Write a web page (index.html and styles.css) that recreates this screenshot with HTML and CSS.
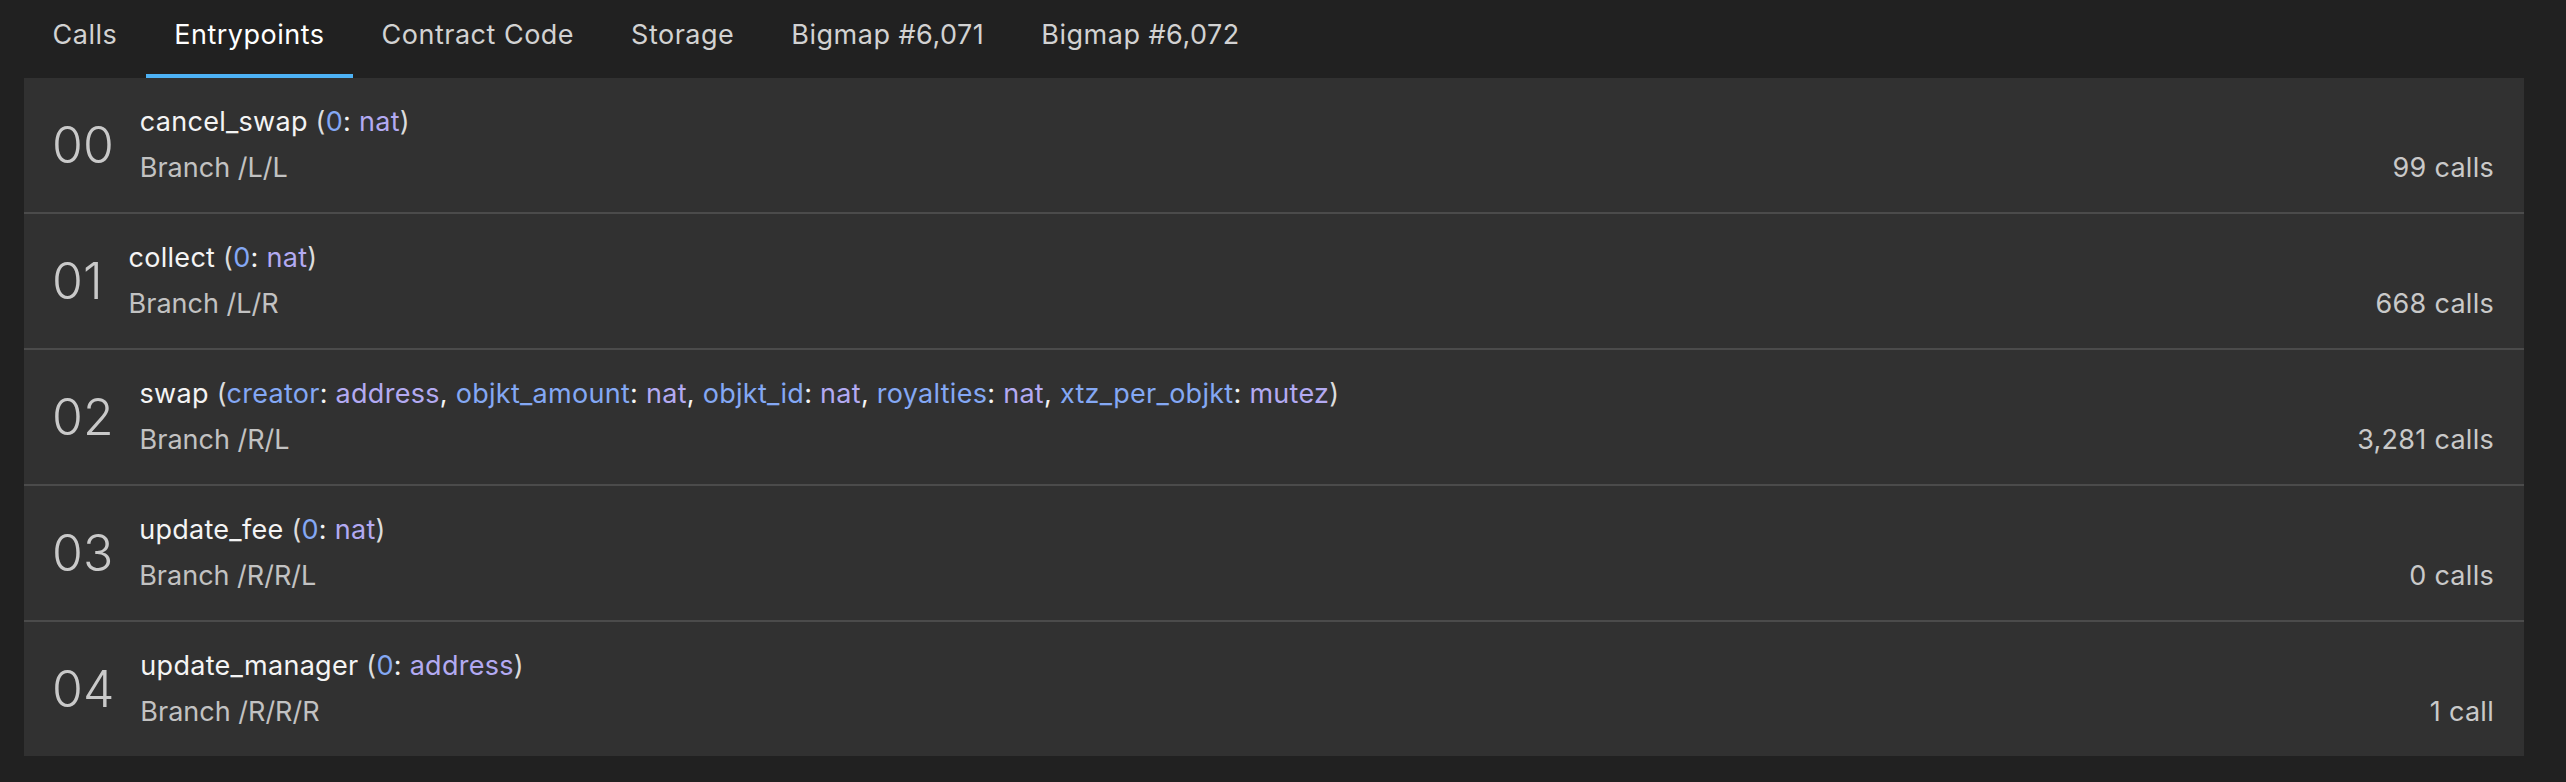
FILE: index.html
```html
<!DOCTYPE html>
<html lang="en">
<head>
<meta charset="utf-8">
<title>Entrypoints</title>
<link rel="stylesheet" href="styles.css">
</head>
<body>
<div class="page">
  <nav class="tabs">
    <div class="tab">Calls</div>
    <div class="tab active">Entrypoints</div>
    <div class="tab">Contract Code</div>
    <div class="tab">Storage</div>
    <div class="tab">Bigmap #6,071</div>
    <div class="tab">Bigmap #6,072</div>
  </nav>
  <div class="card">
    <div class="ep">
      <div class="num">00</div>
      <div class="body">
        <div class="name">cancel_swap <span class="p">(</span><span class="arg">0</span>: <span class="type">nat</span><span class="p">)</span></div>
        <div class="branch">Branch /L/L</div>
        <div class="count">99 calls</div>
      </div>
    </div>
    <div class="ep">
      <div class="num">01</div>
      <div class="body">
        <div class="name">collect <span class="p">(</span><span class="arg">0</span>: <span class="type">nat</span><span class="p">)</span></div>
        <div class="branch">Branch /L/R</div>
        <div class="count">668 calls</div>
      </div>
    </div>
    <div class="ep">
      <div class="num">02</div>
      <div class="body">
        <div class="name">swap <span class="p">(</span><span class="arg">creator</span>: <span class="type">address</span>, <span class="arg">objkt_amount</span>: <span class="type">nat</span>, <span class="arg">objkt_id</span>: <span class="type">nat</span>, <span class="arg">royalties</span>: <span class="type">nat</span>, <span class="arg">xtz_per_objkt</span>: <span class="type">mutez</span><span class="p">)</span></div>
        <div class="branch">Branch /R/L</div>
        <div class="count">3,281 calls</div>
      </div>
    </div>
    <div class="ep">
      <div class="num">03</div>
      <div class="body">
        <div class="name">update_fee <span class="p">(</span><span class="arg">0</span>: <span class="type">nat</span><span class="p">)</span></div>
        <div class="branch">Branch /R/R/L</div>
        <div class="count">0 calls</div>
      </div>
    </div>
    <div class="ep">
      <div class="num">04</div>
      <div class="body">
        <div class="name">update_manager <span class="p">(</span><span class="arg">0</span>: <span class="type">address</span><span class="p">)</span></div>
        <div class="branch">Branch /R/R/R</div>
        <div class="count">1 call</div>
      </div>
    </div>
  </div>
</div>
</body>
</html>
```

FILE: styles.css
```css
html, body {
  margin: 0;
  padding: 0;
  background: #212121;
}

body {
  font-family: Inter, "Noto Sans", "Liberation Sans", sans-serif;
  color: #ffffff;
}

.page {
  padding: 0 42px 26px 24px;
}

.tabs {
  display: flex;
  height: 78px;
}

.tab {
  box-sizing: border-box;
  height: 78px;
  padding: 19px 28.5px 0;
  font-size: 27px;
  letter-spacing: 0.5px;
  line-height: 32px;
  color: #d2d2d2;
  border-bottom: 4px solid transparent;
  white-space: nowrap;
}

.tab.active {
  color: #ffffff;
  border-bottom-color: #4db2f5;
}

.card {
  background: #313131;
}

.ep {
  display: flex;
  align-items: center;
  min-height: 134px;
  padding: 0 30px 0 28px;
  border-bottom: 2px solid #4b4b4b;
}

.ep:last-child {
  border-bottom: none;
}

.num {
  font-size: 50px;
  font-weight: 300;
  color: #c9c9c9;
  margin-right: 26px;
  line-height: 1;
}

.body {
  flex: 1;
  display: grid;
  grid-template-columns: 1fr auto;
  font-size: 27px;
  letter-spacing: 0.28px;
  line-height: 46px;
}

.name {
  grid-column: 1 / 3;
  color: #f4f4f4;
}

.branch {
  color: #c2c2c2;
  letter-spacing: 0;
}

.count {
  color: #c9c9c9;
  text-align: right;
}

.p {
  color: #dcdcdc;
}

.arg {
  color: #84a8f4;
}

.type {
  color: #b3aaf2;
}
```
